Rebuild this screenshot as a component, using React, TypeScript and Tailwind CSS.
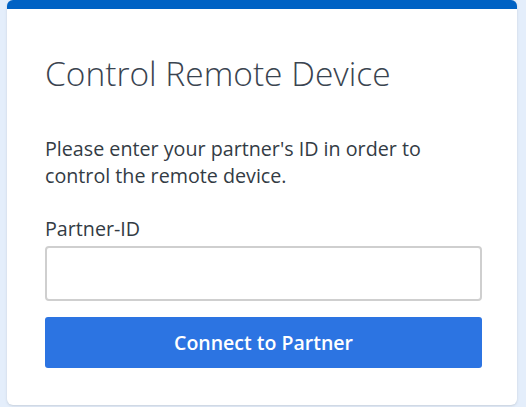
const App = () => {
  return (
    <div className="h-[407px] w-[526px] overflow-hidden bg-[#e4eefb] pl-[7px] pr-[9px] pb-[2px]" style={{ fontFamily: '"Open Sans", "Noto Sans", sans-serif' }}>
      <div className="flex h-full flex-col rounded-md border-t-[9px] border-[#0062c4] bg-white pl-[38px] pr-[35px] pt-[42px] shadow-sm">
        <h1 className="text-[33.5px] font-light leading-[44px] text-[#3a4450]">Control Remote Device</h1>
        <p className="mt-[40px] text-[19.7px] leading-[27px] text-[#333b44]">
          Please enter your partner's ID in order to
          <br />
          control the remote device.
        </p>
        <label className="mt-[26px] text-[19.7px] leading-[27px] text-[#333b44]">Partner-ID</label>
        <input type="text" className="mt-[4px] h-[55px] w-full rounded-[4px] border-2 border-[#cfcfcf] bg-white px-3 text-[19px] outline-none" />
        <button className="mt-[16px] h-[51px] w-full rounded-[3px] bg-[#2c74e2] text-[19.5px] font-semibold text-white">
          Connect to Partner
        </button>
      </div>
    </div>
  )
}

export default App
